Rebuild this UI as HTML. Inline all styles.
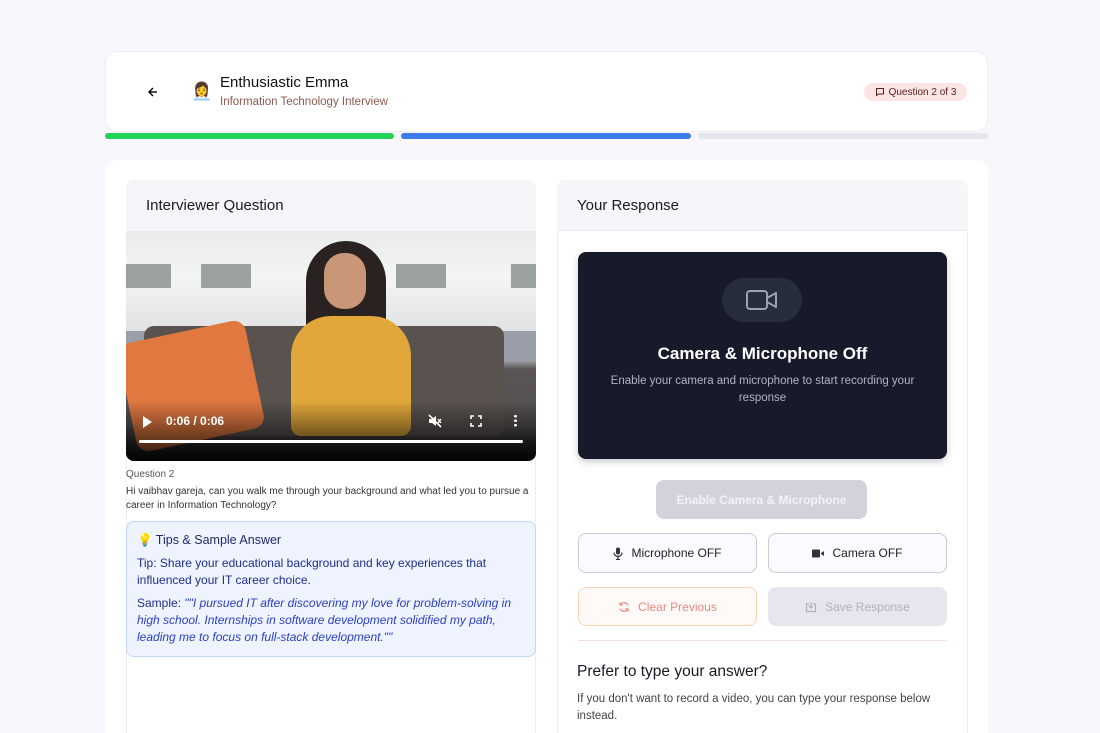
<!DOCTYPE html>
<html><head><meta charset="utf-8"><style>
*{box-sizing:border-box;margin:0;padding:0}
html,body{width:1100px;height:733px;overflow:hidden}
body{background:#f8f8fc;font-family:"Liberation Sans",sans-serif;color:#1a1a24;position:relative}
.abs{position:absolute}
.card{background:#fff;border:1px solid #ececf2;border-radius:12px}
.btn{position:absolute;border-radius:8px;display:flex;align-items:center;justify-content:center;font-size:12px;gap:8px}
</style></head><body>
<div class="abs card" style="left:105px;top:51px;width:883px;height:81px"></div>
<svg class="abs" style="left:146px;top:85px" width="14" height="14" viewBox="0 0 14 14"><path d="M11 7H3M7 3L3 7l4 4" stroke="#111" stroke-width="1.5" fill="none"/></svg>
<div class="abs" style="left:191px;top:82px;font-size:17px">👩‍💼</div>
<div class="abs" style="left:220px;top:74px;font-size:15px;color:#111">Enthusiastic Emma</div>
<div class="abs" style="left:220px;top:96px;font-size:11.5px;color:#8a5a50">Information Technology Interview</div>
<div class="abs" style="left:864px;top:83px;width:103px;height:18px;border-radius:9px;background:#fde5e5;color:#5a2020;font-size:10px;display:flex;align-items:center;justify-content:center;gap:4px"><svg width="10" height="10" viewBox="0 0 10 10"><path d="M1.5 1.5h7v5.5h-5l-2 1.5z" stroke="#5a2020" fill="none" stroke-width="1"/></svg>Question 2 of 3</div>
<div class="abs" style="left:105px;top:133px;width:289px;height:6px;border-radius:3px;background:#22d35a"></div>
<div class="abs" style="left:401px;top:133px;width:290px;height:6px;border-radius:3px;background:#3b7bec"></div>
<div class="abs" style="left:698px;top:133px;width:290px;height:6px;border-radius:3px;background:#e6e4ec"></div>

<div class="abs" style="left:105px;top:160px;width:883px;height:573px;background:#fff;border-radius:12px 12px 0 0"></div>
<!-- left panel -->
<div class="abs" style="left:126px;top:180px;width:410px;height:553px;border:1px solid #f0ecef;border-bottom:none;border-radius:8px 8px 0 0"></div>
<div class="abs" style="left:126px;top:180px;width:410px;height:51px;background:#f5f4f9;border-radius:8px 8px 0 0"></div>
<div class="abs" style="left:146px;top:197px;font-size:15px">Interviewer Question</div>
<div class="abs" style="left:126px;top:231px;width:410px;height:230px;border-radius:0 0 8px 8px;overflow:hidden;background:linear-gradient(#e8ebec 0,#f4f5f5 20%,#dfe1e2 45%,#b9bcc4 55%,#5a5556 60%,#534e4f 85%,#1a1a1a 100%)">
 <div class="abs" style="left:0;top:33px;width:45px;height:24px;background:#9aa19e"></div>
 <div class="abs" style="left:75px;top:33px;width:50px;height:24px;background:#9aa19e"></div>
 <div class="abs" style="left:270px;top:33px;width:50px;height:24px;background:#9aa19e"></div>
 <div class="abs" style="left:385px;top:33px;width:25px;height:24px;background:#9aa19e"></div>
 <div class="abs" style="left:0;top:100px;width:410px;height:30px;background:#9a9ea8"></div>
 <div class="abs" style="left:18px;top:95px;width:360px;height:110px;background:#59524f;border-radius:10px"></div>
 <div class="abs" style="left:0;top:100px;width:130px;height:110px;background:#e07840;border-radius:12px;transform:rotate(-12deg)"></div>
 <div class="abs" style="left:180px;top:10px;width:80px;height:110px;background:#2a2220;border-radius:40px 40px 10px 10px"></div>
 <div class="abs" style="left:198px;top:22px;width:42px;height:56px;background:#c99778;border-radius:20px"></div>
 <div class="abs" style="left:165px;top:85px;width:120px;height:120px;background:#e1a73a;border-radius:40px 40px 10px 10px"></div>
 <div class="abs" style="left:0;top:170px;width:410px;height:60px;background:linear-gradient(rgba(0,0,0,0),rgba(0,0,0,.85))"></div>
 <div class="abs" style="left:17px;top:185px;width:0;height:0;border-left:9px solid #fff;border-top:6px solid transparent;border-bottom:6px solid transparent"></div>
 <div class="abs" style="left:40px;top:183px;color:#fff;font-size:12px;font-weight:bold">0:06 / 0:06</div>
 <svg class="abs" style="left:302px;top:183px" width="14" height="14" viewBox="0 0 14 14"><path d="M1 5h3l4-3v10l-4-3H1z" fill="#fff"/><path d="M1 1l12 12" stroke="#fff" stroke-width="1.6"/><path d="M10 5l3 4M13 5l-3 4" stroke="#fff" stroke-width="1.3"/></svg>
 <svg class="abs" style="left:344px;top:184px" width="12" height="12" viewBox="0 0 12 12"><path d="M1 4V1h3M8 1h3v3M11 8v3H8M4 11H1V8" stroke="#fff" stroke-width="1.6" fill="none"/></svg>
 <div class="abs" style="left:388px;top:183px;width:3px;height:13px;background:radial-gradient(circle,#fff 1.3px,transparent 1.5px) 0 0/3px 4.5px"></div>
 <div class="abs" style="left:13px;top:209px;width:384px;height:3px;background:#fff;border-radius:2px"></div>
</div>
<div class="abs" style="left:126px;top:469px;font-size:10px;color:#555">Question 2</div>
<div class="abs" style="left:126px;top:485px;width:410px;font-size:10px;line-height:14px;color:#333">Hi vaibhav gareja, can you walk me through your background and what led you to pursue a career in Information Technology?</div>
<div class="abs" style="left:126px;top:521px;width:410px;height:136px;background:#eef3fe;border:1px solid #c3d6f4;border-radius:8px;color:#1e2f8a;font-size:12px;padding:11px 10px">
 <div style="font-size:12.5px;color:#222a6a">💡 Tips &amp; Sample Answer</div>
 <div style="margin-top:7px;line-height:17px">Tip: Share your educational background and key experiences that influenced your IT career choice.</div>
 <div style="margin-top:6px;line-height:17px">Sample: <i style="color:#2b3fc2">""I pursued IT after discovering my love for problem-solving in high school. Internships in software development solidified my path, leading me to focus on full-stack development.""</i></div>
</div>
<!-- right panel -->
<div class="abs" style="left:557px;top:180px;width:411px;height:553px;border:1px solid #ececf2;border-bottom:none;border-radius:8px 8px 0 0"></div>
<div class="abs" style="left:557px;top:180px;width:411px;height:51px;background:#f6f5fa;border-radius:8px 8px 0 0;border-bottom:1px solid #ececf2"></div>
<div class="abs" style="left:577px;top:197px;font-size:15px">Your Response</div>
<div class="abs" style="left:578px;top:252px;width:369px;height:207px;background:#171a2a;border-radius:8px;box-shadow:0 3px 8px rgba(0,0,0,.2)"></div>
<div class="abs" style="left:722px;top:278px;width:80px;height:44px;border-radius:22px;background:#282d3e"></div>
<svg class="abs" style="left:745px;top:288px" width="34" height="24" viewBox="0 0 34 24"><rect x="2" y="3" width="20" height="18" rx="3" stroke="#9ea2ae" stroke-width="2" fill="none"/><path d="M22 10l9-5v14l-9-5z" stroke="#9ea2ae" stroke-width="2" fill="none" stroke-linejoin="round"/></svg>
<div class="abs" style="left:578px;top:344px;width:369px;text-align:center;color:#fff;font-size:17px;font-weight:bold">Camera &amp; Microphone Off</div>
<div class="abs" style="left:598px;top:373px;width:329px;text-align:center;color:#b0b4c0;font-size:11.5px;line-height:17px">Enable your camera and microphone to start recording your response</div>
<div class="btn" style="left:656px;top:480px;width:211px;height:39px;background:#d2d2dc;color:#f2f2f6;font-weight:bold">Enable Camera &amp; Microphone</div>
<div class="btn" style="left:578px;top:533px;width:179px;height:40px;border:1.5px solid #c8cad8;background:#fafbff;color:#222"><svg width="10" height="13" viewBox="0 0 10 13"><rect x="3" y="0.5" width="4" height="7" rx="2" fill="#333"/><path d="M1 5.5a4 4 0 0 0 8 0M5 9.5v3M3 12.5h4" stroke="#333" stroke-width="1.2" fill="none"/></svg>Microphone OFF</div>
<div class="btn" style="left:768px;top:533px;width:179px;height:40px;border:1.5px solid #c8cad8;background:#fafbff;color:#222"><svg width="12" height="9" viewBox="0 0 12 9"><rect x="0" y="0.5" width="8" height="8" rx="1" fill="#333"/><path d="M8.5 4.5L12 2v5z" fill="#333"/></svg>Camera OFF</div>
<div class="btn" style="left:578px;top:587px;width:179px;height:39px;border:1.5px solid #fdd5b5;background:#fffaf7;color:#e88a80"><svg width="12" height="12" viewBox="0 0 12 12"><path d="M10 4.5A4.2 4.2 0 0 0 2.3 4M2 7.5a4.2 4.2 0 0 0 7.7.5M2 1.5V4h2.5M10 10.5V8H7.5" stroke="#e88a80" stroke-width="1.2" fill="none"/></svg>Clear Previous</div>
<div class="btn" style="left:768px;top:587px;width:179px;height:39px;background:#e6e6ee;color:#b0b0bc"><svg width="12" height="12" viewBox="0 0 12 12"><path d="M4 3H1.5v7.5h9V3H8M6 1v6M4 5l2 2 2-2" stroke="#b0b0bc" stroke-width="1.2" fill="none"/></svg>Save Response</div>
<div class="abs" style="left:578px;top:640px;width:369px;height:1px;background:#f1dede"></div>
<div class="abs" style="left:577px;top:663px;font-size:15.5px">Prefer to type your answer?</div>
<div class="abs" style="left:577px;top:691px;width:380px;font-size:11.5px;line-height:17px;color:#444">If you don't want to record a video, you can type your response below instead.</div>
</body></html>
